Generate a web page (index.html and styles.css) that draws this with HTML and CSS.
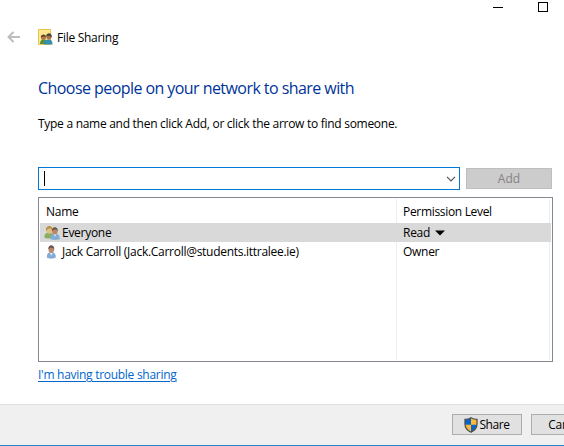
FILE: index.html
```html
<!DOCTYPE html>
<html lang="en">
<head>
<meta charset="utf-8">
<title>File Sharing</title>
<link rel="stylesheet" href="styles.css">
</head>
<body>
<div class="window">
  <div class="caption">
    <svg width="66" height="16" viewBox="0 0 66 16" fill="none" stroke="#000" stroke-width="1" shape-rendering="crispEdges"><path d="M0 7.5h10M45.500 2.500h9v9h-9z"/></svg>
  </div>
  <header class="titlebar">
    <svg class="back" width="14" height="12" viewBox="0 0 14 12" fill="none" stroke="#bcbcbc" stroke-width="1.900"><path d="M1.500 6H13M6.500 1L1.500 6l5 5"/></svg>
    <svg class="app-icon" width="16" height="18" viewBox="0 0 16 18">
      <path d="M.5 1.500h12v15H.5z" fill="#ffe78b" stroke="#edc24d"/>
      <path d="M2 16c0-3 1-4.500 3.500-4.500S9 13 9 16z" fill="#4d9140"/>
      <circle cx="5.500" cy="9.500" r="2.500" fill="#ad784c"/>
      <path d="M2.800 9.500c-.3-4 5.400-4 5.400-.5C6 8.300 4.500 8.500 2.800 9.500z" fill="#594529"/>
      <path d="M6 16.500c0-3.500 1.500-5 4.500-5s4 1.500 4 5z" fill="#398eaf"/>
      <circle cx="11" cy="8.800" r="2.600" fill="#a9714e"/>
      <path d="M8.200 8.500c0-4.500 6-4.500 5.600.5-1.500-.8-3.400-1.300-5.600-.5z" fill="#4e4437"/>
    </svg>
    <span class="title">File Sharing</span>
  </header>
  <main class="content">
    <h1>Choose people on your network to share with</h1>
    <p class="hint">Type a name and then click Add, or click the arrow to find someone.</p>
    <div class="entry">
      <div class="combo">
        <span class="caret"></span>
        <svg width="10" height="6" viewBox="0 0 10 6" fill="none" stroke="#555" stroke-width="1.200"><path d="M1 .8l4 4 4-4"/></svg>
      </div>
      <div class="button add">Add</div>
    </div>
    <div class="list">
      <div class="row head"><span class="name">Name</span><span class="level perm">Permission Level</span></div>
      <div class="row selected">
        <span class="name">
          <svg width="16" height="16" viewBox="0 0 16 16">
            <path d="M.3 12.500C.3 9 2 7.500 5 7.500s4.500 1.500 4.500 5c-2 1.300-7 1.300-9.200 0z" fill="#8bae65"/>
            <ellipse cx="5.200" cy="5" rx="3" ry="3.700" fill="#e2bf85"/>
            <path d="M2 6C1-.6 9-.6 8.700 5 7.500 3.300 4 3 3.500 4.500z" fill="#b89243"/>
            <path d="M6.500 14c0-4 1.500-5.300 4.500-5.300s4.800 1.300 4.800 5.300c-2 1.200-7.300 1.200-9.300 0z" fill="#83acd4"/>
            <path d="M9.500 8.800l1.500 3 1.500-3z" fill="#e8f2f7"/>
            <ellipse cx="10.800" cy="6" rx="2.800" ry="3.500" fill="#b98765"/>
            <path d="M7.800 6C7.500.8 14.300.8 13.900 6.500c-1-2.700-3.500-2.500-6.100-.5z" fill="#68564a"/>
          </svg>
          <span class="everyone">Everyone</span>
        </span>
        <span class="level read">Read<svg width="10" height="6" viewBox="0 0 10 6"><path d="M0 .5h10L5 5.500z"/></svg></span>
      </div>
      <div class="row owner">
        <span class="name">
          <svg width="16" height="16" viewBox="0 0 16 16">
            <path d="M2.800 13.500C2.800 9.500 4.300 8 7.300 8s4.500 1.500 4.500 5.500c-2 1.500-7 1.500-9 0z" fill="#82abd6"/>
            <path d="M5.700 8.500l1.600 3.300 1.600-3.300z" fill="#e5eef5"/>
            <ellipse cx="7.300" cy="5.300" rx="2.800" ry="3.600" fill="#b98a70"/>
            <path d="M4.300 5.200C4-.2 10.700-.2 10.300 5.800c-1-2.600-3-2.800-6-.6z" fill="#66564e"/>
          </svg>
          <span class="jack">Jack Carroll (Jack.Carroll@students.ittralee.ie)</span>
        </span>
        <span class="level own">Owner</span>
      </div>
      <div class="row rest"><span class="name"></span><span class="level"></span></div>
    </div>
    <a class="help">I'm having trouble sharing</a>
  </main>
  <footer class="footer">
    <div class="button share">
      <svg width="14" height="16" viewBox="0 0 14 16">
        <path d="M7 .7Q4.500 2.300 1 2.300V7c0 4 2 6.500 6 8.300z" fill="#0864ca"/>
        <path d="M7 .7q2.500 1.600 6 1.600V7c0 4-2 6.500-6 8.300z" fill="#ffb936"/>
        <path d="M1 7.700h6v7.600C3.500 13.600 1.300 11.300 1 7.700z" fill="#ffb936"/>
        <path d="M7 7.700h6c-.3 3.600-2.500 5.900-6 7.600z" fill="#0864ca"/>
        <path d="M7 .8Q4.500 2.400 1 2.400V7c0 4 2 6.400 6 8.200 4-1.800 6-4.200 6-8.200V2.400Q9.500 2.400 7 .8z" fill="none" stroke="#505254" stroke-width="1.300"/>
      </svg>
      <span>Share</span>
    </div>
    <div class="button cancel">Cancel</div>
  </footer>
</div>
</body>
</html>
```
FILE: styles.css
```css
* { box-sizing: border-box; }
body { margin: 0; background: #fff; color: #000; font: 12px/16px "Open Sans", "Noto Sans", sans-serif; letter-spacing: -0.28px; overflow: hidden; }
svg { display: block; flex: none; }
.window { width: 564px; height: 446px; display: flex; flex-direction: column; overflow: hidden; border-bottom: 1px solid #2b83c5; }
.caption { height: 26px; padding-left: 493px; }
.titlebar { height: 24px; display: flex; align-items: center; letter-spacing: -0.28px; }
.back { margin-left: 7px; margin-right: 17px; margin-top: -2px; }
.app-icon { margin-right: 3px; margin-top: -2px; }
.content { height: 354px; padding: 27px 11px 0 38px; white-space: nowrap; }
h1 { margin: 0; font-size: 16px; line-height: 22px; font-weight: 400; color: #003399; letter-spacing: -0.56px; }
.hint { margin: 17px 0 35px; }
.entry { display: flex; gap: 6px; height: 23px; align-items: center; }
.combo { width: 422px; height: 23px; border: 1px solid #0078d7; display: flex; align-items: center; justify-content: space-between; padding: 0 3px 0 5px; }
.caret { width: 1px; height: 15px; background: #000; }
.button { height: 21px; border: 1px solid #adadad; background: #e1e1e1; display: flex; align-items: center; justify-content: center; flex: none; }
.add { width: 86px; background: #ccc; border-color: #bfbfbf; color: #838383; letter-spacing: 0; }
.list { width: 515px; height: 165px; margin-top: 7px; border: 1px solid #828790; padding: 1px; display: flex; flex-direction: column; }
.row { display: flex; height: 19px; line-height: 19px; padding-right: 1px; }
.row .name { width: 356px; display: flex; align-items: center; padding-left: 4px; gap: 2px; }
.row .level { flex: 1; border-left: 1px solid #e5f0fb; border-right: 1px solid #e5f0fb; padding-left: 6px; }
.row .perm { letter-spacing: -0.32px; }
.head { height: 24px; line-height: 26px; }
.head .name { padding-left: 6px; align-items: flex-start; }
.selected { background: #d9d9d9; }
.row .read { display: flex; align-items: center; gap: 5px; border-color: #d9d9d9; }
.rest { flex: 1; }
.help { display: inline-block; margin-top: 5px; color: #0066cc; text-decoration: underline; text-underline-offset: 2px; }
.footer { height: 41px; border-top: 1px solid #dfdfdf; background: #f0f0f0; display: flex; padding: 9px 0 0 452px; gap: 9px; }
.share, .cancel { width: 70px; }
.share { gap: 1px; letter-spacing: -0.45px; }
```
